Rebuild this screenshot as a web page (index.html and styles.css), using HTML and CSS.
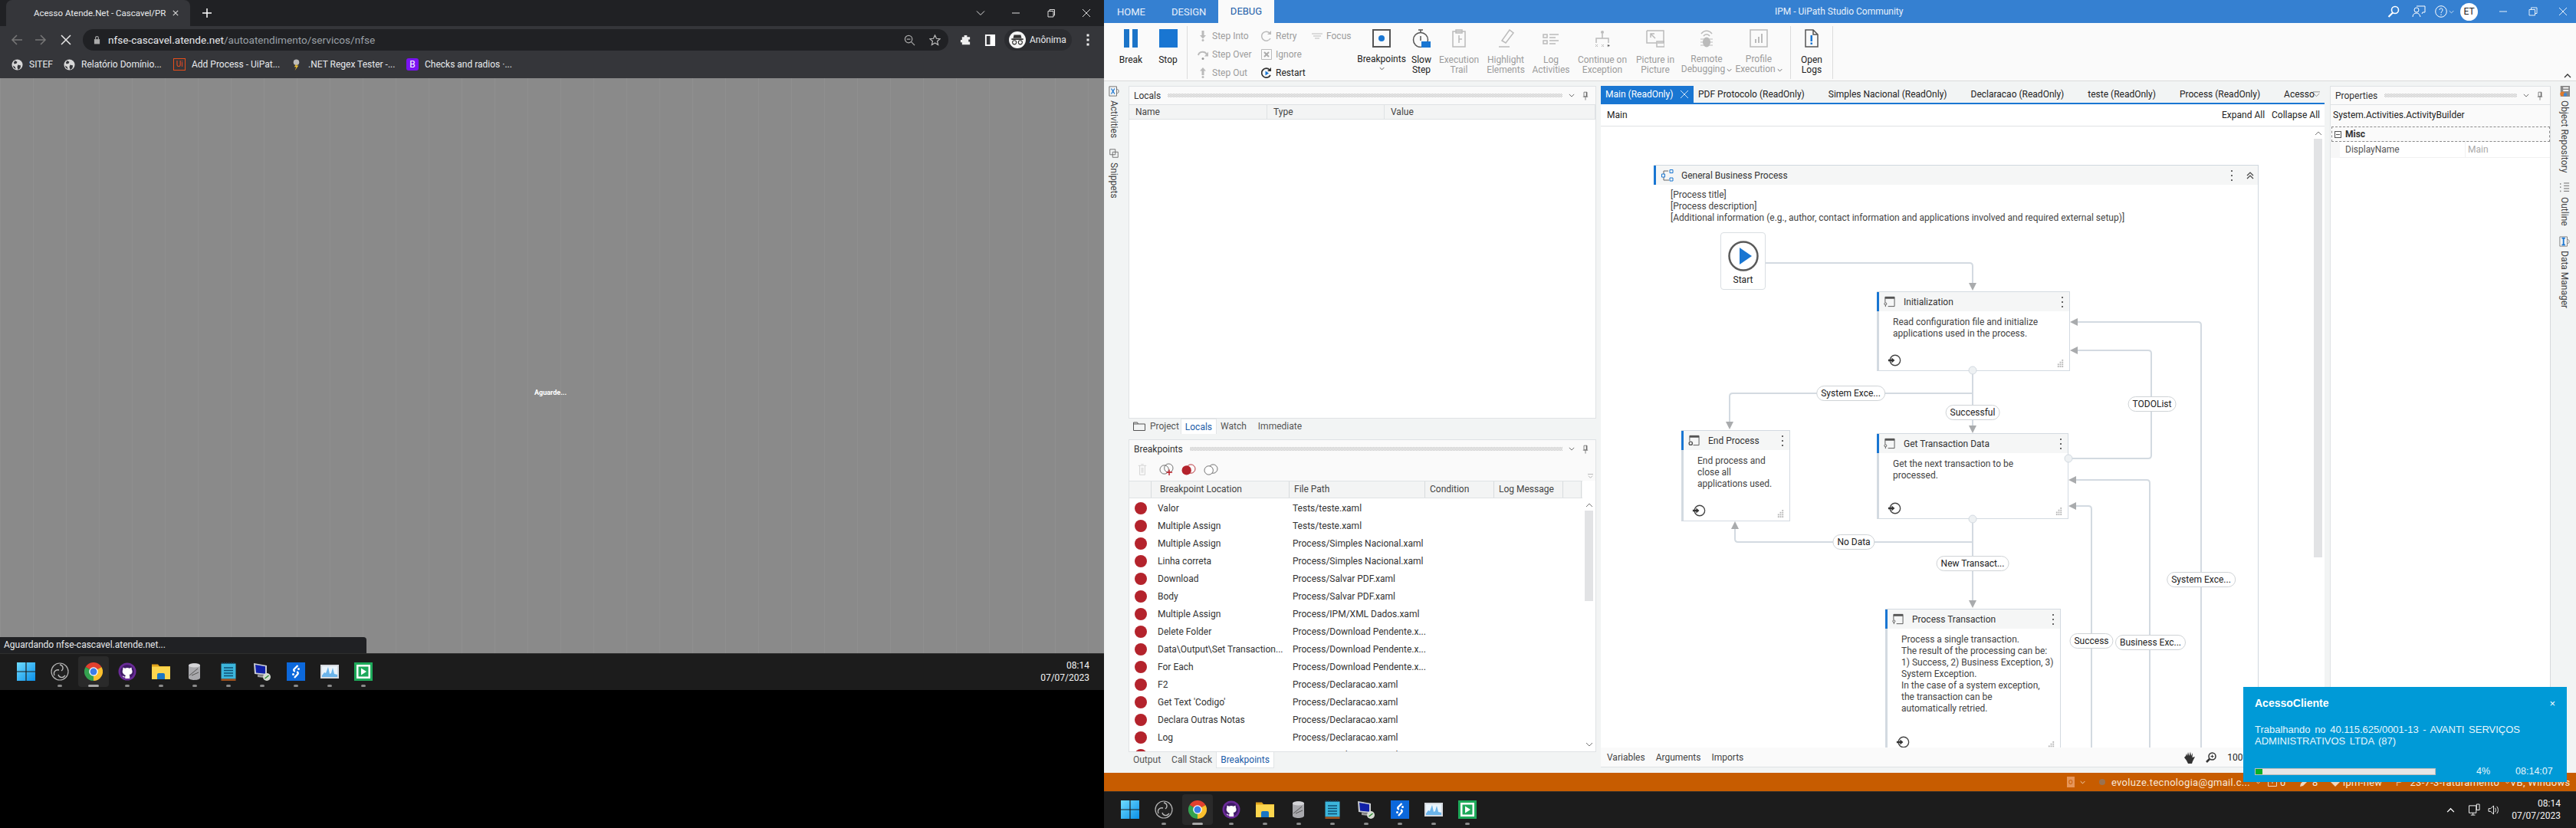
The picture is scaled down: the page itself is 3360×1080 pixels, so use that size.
FILE: index.html
```html
<!DOCTYPE html>
<html lang="en">

<head>
    <meta charset="UTF-8">
    <title>IPM - UiPath Studio Community</title>
    <link rel="stylesheet" href="styles.css">
</head>

<body>
    <!-- shared icons -->
    <svg class="sprite" xmlns="http://www.w3.org/2000/svg">
        <defs>
            <linearGradient id="winblue" x1="0" y1="0" x2="1" y2="1">
                <stop offset="0" stop-color="#6fdcff" />
                <stop offset="1" stop-color="#0a8fe8" />
            </linearGradient>
        </defs>
        <symbol id="s-win" viewBox="0 0 24 24">
            <path fill="url(#winblue)" d="M0 0h11.4v11.4H0zM12.6 0H24v11.4H12.6zM0 12.6h11.4V24H0zM12.6 12.6H24V24H12.6z" />
        </symbol>
        <symbol id="s-obs" viewBox="0 0 24 24">
            <circle cx="12" cy="12" r="11" fill="#222" stroke="#b4b4b4" stroke-width="1.2" />
            <path fill="none" stroke="#bdbdbd" stroke-width="1.3" d="M12 3c5 1 5 6 2 8M5 17c-2-5 2-8 6-7M19 17c-3 4-8 3-9-1" />
        </symbol>
        <symbol id="s-chrome" viewBox="0 0 24 24">
            <path fill="#e2402f" d="M12 12 1.6 6a12 12 0 0 1 20.8 0z" />
            <path fill="#34a24f" d="M12 12 1.6 6A12 12 0 0 0 12 24z" />
            <path fill="#fbc02d" d="M12 12 22.4 6A12 12 0 0 1 12 24z" />
            <circle cx="12" cy="12" r="5.8" fill="#fff" />
            <circle cx="12" cy="12" r="4.5" fill="#3b7de8" />
        </symbol>
        <symbol id="s-github" viewBox="0 0 24 24">
            <circle cx="12" cy="12" r="11.5" fill="#6a2a98" />
            <circle cx="12" cy="12" r="9" fill="#3f1a66" />
            <path fill="#fff" d="M6.5 6.5 9 7.7a8 8 0 0 1 6 0l2.5-1.2.4 3c1.5 3 .5 6-3.4 6.5.6.5.7 1 .7 2v3H9.300v-1.500c-2 .4-3-.4-3.600-2l1.400.2c.6 1 1.200 1.100 2.200.8 0-.5.200-1 .6-1.500C6 15 5 12.500 6.200 9.500z" />
        </symbol>
        <symbol id="s-folder" viewBox="0 0 24 24">
            <path fill="#e0a21a" d="M0 2.500h8l2 2.500h14v4H0z" />
            <path fill="#fcd64e" d="M0 5.500h24V22H0z" />
            <path fill="#1976c4" d="M7 16a2 2 0 0 1 2-2h6a2 2 0 0 1 2 2v6H7z" />
        </symbol>
        <symbol id="s-db" viewBox="0 0 24 24">
            <path fill="#a9a9ad" d="M4 4c0-4 15-4 15 0v16c0 4-15 4-15 0z" />
            <ellipse cx="11.500" cy="4" rx="7.500" ry="2.500" fill="#d5d5d8" />
            <path fill="none" stroke="#555" d="M5 17 16 8M8 17l9-4" />
        </symbol>
        <symbol id="s-notes" viewBox="0 0 24 24">
            <path fill="#3cb6dc" d="M2.500 1.500h19v20h-19z" />
            <path fill="#a0521e" d="M2.500 21.500h19V24h-19z" />
            <path stroke="#0e4f73" stroke-width="1.600" d="M6 7h12M6 10.500h12M6 14h12M6 17.500h12" />
            <path stroke="#0e4f73" stroke-width="1.500" stroke-dasharray="1.500 1.500" d="M3 1h18" />
        </symbol>
        <symbol id="s-remote" viewBox="0 0 24 24">
            <path fill="#c9ccd2" d="M1 1l17 3v13L2 15z" />
            <path fill="#1020a8" d="M3 3l13 2.200v9.600L4 13.500z" />
            <path fill="#9a9a9a" d="M6 16l8 1v3l-8-1z" />
            <circle cx="18" cy="19" r="5" fill="#d7dcd3" />
            <path stroke="#2a8a2a" stroke-width="1.500" d="M15.500 21l5-4" />
        </symbol>
        <symbol id="s-s" viewBox="0 0 24 24">
            <path fill="#0c68db" d="M0 0h24v24H0z" />
            <path fill="none" stroke="#fff" stroke-width="2.300" d="M14.500 4 9.500 9c-1 1.500 0 2.300 1.500 2.700M13 12.300c1.500.5 2.300 1.200 1.500 2.700L10 20" />
            <circle cx="15.500" cy="8.500" r="1.500" fill="#fff" />
            <circle cx="8.500" cy="15.500" r="1.500" fill="#fff" />
        </symbol>
        <symbol id="s-monitor" viewBox="0 0 24 24">
            <path fill="#d5d9de" d="M0 3h24v18H0z" />
            <path fill="#eaf4fb" d="M2 5h20v14H2z" />
            <path fill="#6bb4ea" d="M2 17l3-4 2 1 3-8 2 9 2-1 2-7 2 8 4 1v3H2z" />
        </symbol>
        <symbol id="s-play" viewBox="0 0 24 24">
            <path fill="#1ea95a" d="M0 0h24v24H0z" />
            <path fill="#fff" d="M3 3h18v18H3z" />
            <path fill="#1ea95a" d="M5.500 5.500h13v13h-13z" />
            <path fill="#fff" d="M9 7.500l7 4.500-7 4.500z" />
        </symbol>
        <symbol id="s-globe" viewBox="0 0 16 16">
            <circle cx="8" cy="8" r="7.500" fill="#d8d8d8" />
            <path fill="#35363a" d="M5 2 8 4 7 6 4 7 3 5zM9 8l4 1-1 4-3 2-1-4zM2 9l3 2 1 3-3-2z" />
        </symbol>
        <symbol id="s-seq" viewBox="0 0 16 16">
            <path fill="none" stroke="#555" d="M2 9V1.500h13v13H6" />
            <path fill="#555" d="M2 1h13v3H2z" />
            <circle cx="2.500" cy="11" r="1.600" fill="none" stroke="#555" />
            <path stroke="#555" d="M2.500 12.500V15" />
        </symbol>
        <symbol id="s-seq-end" viewBox="0 0 16 16">
            <path fill="none" stroke="#555" d="M2 9V1.500h13v13H7" />
            <path fill="#555" d="M2 1h13v3H2z" />
            <circle cx="3.500" cy="12" r="2.300" fill="none" stroke="#555" stroke-width="1.500" />
        </symbol>
        <symbol id="s-entry" viewBox="0 0 20 20">
            <circle cx="11" cy="10" r="7.500" fill="none" stroke="#444" stroke-width="1.500" />
            <path fill="#333" d="M1 8.500h5V6l4.500 4L6 14v-2.500H1z" />
        </symbol>
        <symbol id="s-grip" viewBox="0 0 12 12">
            <path fill="#b3b3b3" d="M8 1h2v2H8zM8 4h2v2H8zM5 4h2v2H5zM8 7h2v2H8zM5 7h2v2H5zM2 7h2v2H2zM8 10h2v2H8zM5 10h2v2H5zM2 10h2v2H2z" />
        </symbol>
        <symbol id="s-dots" viewBox="0 0 4 16">
            <path fill="#666" d="M1 1h2v2H1zM1 7h2v2H1zM1 13h2v2H1z" />
        </symbol>
        <symbol id="s-chev" viewBox="0 0 10 6">
            <path fill="none" stroke="currentColor" stroke-width="1.200" d="M1 1l4 4 4-4" />
        </symbol>
        <symbol id="s-pin" viewBox="0 0 10 14">
            <path fill="none" stroke="#666" d="M2.500 1h5v7h-5zM1 8.500h8M5 9v5" />
            <path fill="#666" d="M6 1h1.500v7H6z" />
        </symbol>
        <symbol id="s-bp" viewBox="0 0 16 16">
            <circle cx="8" cy="8" r="8" fill="#b4232c" />
        </symbol>
    </svg>

    <div class="desktop">
        <section class="screen-left">
            <div class="browser">
                <div class="tabstrip">
                    <div class="browser-tab">
                        <span class="browser-tab-title">Acesso Atende.Net - Cascavel/PR</span>
                        <svg class="tab-x" viewBox="0 0 10 10"><path stroke="#ddd" stroke-width="1.300" d="M1 1l8 8M9 1l-8 8" /></svg>
                    </div>
                    <svg class="tab-plus" viewBox="0 0 12 12"><path stroke="#fff" stroke-width="1.500" d="M6 0v12M0 6h12" /></svg>
                    <div class="win-controls">
                        <svg class="win-ctl" viewBox="0 0 12 12"><path fill="none" stroke="#ddd" d="M1 3.500l5 5 5-5" /></svg>
                        <svg class="win-ctl" viewBox="0 0 12 12"><path stroke="#ddd" d="M1 6h10" /></svg>
                        <svg class="win-ctl" viewBox="0 0 12 12"><path fill="none" stroke="#ddd" d="M2 3.500h7v7.500H2zM4 3.500V1.500h6.500V9H9" /></svg>
                        <svg class="win-ctl" viewBox="0 0 12 12"><path stroke="#ddd" d="M1 1l10 10M11 1 1 11" /></svg>
                    </div>
                </div>
                <div class="toolbar">
                    <svg class="nav-ic nav-back" viewBox="0 0 16 16"><path fill="none" stroke="#777" stroke-width="1.500" d="M15 8H2M8 2 2 8l6 6" /></svg>
                    <svg class="nav-ic nav-fwd" viewBox="0 0 16 16"><path fill="none" stroke="#777" stroke-width="1.500" d="M1 8h13M8 2l6 6-6 6" /></svg>
                    <svg class="nav-ic nav-stop" viewBox="0 0 16 16"><path stroke="#e8e8e8" stroke-width="1.500" d="M2 2l12 12M14 2 2 14" /></svg>
                    <div class="omnibox">
                        <svg class="lock" viewBox="0 0 10 12"><path fill="#aaa" d="M1 5h8v7H1z" /><path fill="none" stroke="#aaa" stroke-width="1.300" d="M3 5V3a2 2 0 0 1 4 0v2" /></svg>
                        <span class="url"><b>nfse-cascavel.atende.net</b>/autoatendimento/servicos/nfse</span>
                        <svg class="omni-ic omni-search" viewBox="0 0 16 16"><circle cx="6.500" cy="6.500" r="5" fill="none" stroke="#aaa" stroke-width="1.300" /><path stroke="#aaa" stroke-width="1.300" d="M10 10l5 5M4 6.500h5" /></svg>
                        <svg class="omni-ic omni-star" viewBox="0 0 16 16"><path fill="none" stroke="#bbb" stroke-width="1.300" d="M8 1l2.100 4.600 5 .5-3.800 3.300 1.100 5L8 11.800l-4.400 2.600 1.100-5L.9 6.100l5-.5z" /></svg>
                    </div>
                    <svg class="tool-ic tool-ext" viewBox="0 0 16 16"><path fill="#eee" d="M6 1h4v2.500h4V7h-2v3h2v4H3v-3H1V7.500h2V3.500h3z" /></svg>
                    <svg class="tool-ic tool-side" viewBox="0 0 14 16"><path fill="#fff" d="M0 0h14v16H0z" /><path fill="#35363a" d="M2 2h5v12H2z" /></svg>
                    <div class="anon-chip">
                        <svg class="anon-face" viewBox="0 0 20 20"><circle cx="10" cy="10" r="10" fill="#f5f5f5" /><path fill="#333" d="M6 4h8l1 4H5zM3 8.500h14V10H3z" /><circle cx="6.500" cy="13" r="2.300" fill="none" stroke="#333" /><circle cx="13.500" cy="13" r="2.300" fill="none" stroke="#333" /></svg>
                        <span>Anônima</span>
                    </div>
                    <svg class="tool-menu" viewBox="0 0 4 16"><path fill="#eee" d="M.5.500h3v3h-3zM.5 6.500h3v3h-3zM.5 12.500h3v3h-3z" /></svg>
                </div>
                <div class="bookmarks">
                    <div class="bookmark bm-sitef"><svg class="bm-ic"><use href="#s-globe" /></svg>SITEF</div>
                    <div class="bookmark bm-dominio"><svg class="bm-ic"><use href="#s-globe" /></svg>Relatório Domínio...</div>
                    <div class="bookmark bm-add"><span class="bm-ui">Ui</span>Add Process - UiPat...</div>
                    <div class="bookmark bm-regex"><svg class="bm-ic" viewBox="0 0 16 16"><circle cx="8" cy="4.500" r="4" fill="#bbb" /><path fill="#f4c430" d="M9 6 5 11h3l-2 5 5-7H8z" /></svg>.NET Regex Tester -...</div>
                    <div class="bookmark bm-boot"><span class="bm-b">B</span>Checks and radios ·...</div>
                </div>
                <div class="page-overlay">
                    <span class="wait-text">Aguarde...</span>
                    <div class="status-tip">Aguardando nfse-cascavel.atende.net...</div>
                </div>
            </div>
            <div class="taskbar">
                <div class="slot"><svg class="task-ic"><use href="#s-win" /></svg></div>
                <div class="slot"><svg class="task-ic"><use href="#s-obs" /></svg><i></i></div>
                <div class="slot active"><svg class="task-ic"><use href="#s-chrome" /></svg><i></i></div>
                <div class="slot"><svg class="task-ic"><use href="#s-github" /></svg><i></i></div>
                <div class="slot"><svg class="task-ic"><use href="#s-folder" /></svg><i></i></div>
                <div class="slot"><svg class="task-ic"><use href="#s-db" /></svg><i></i></div>
                <div class="slot"><svg class="task-ic"><use href="#s-notes" /></svg><i></i></div>
                <div class="slot"><svg class="task-ic"><use href="#s-remote" /></svg><i></i></div>
                <div class="slot"><svg class="task-ic"><use href="#s-s" /></svg><i></i></div>
                <div class="slot"><svg class="task-ic"><use href="#s-monitor" /></svg><i></i></div>
                <div class="slot"><svg class="task-ic"><use href="#s-play" /></svg><i></i></div>
                <div class="clock">08:14<br>07/07/2023</div>
            </div>
            <div class="black-rest"></div>
        </section>

        <section class="screen-right">
            <div class="titlebar">
                <div class="ribbon-tab">HOME</div>
                <div class="ribbon-tab tab-design">DESIGN</div>
                <div class="ribbon-tab tab-debug">DEBUG</div>
                <div class="app-title">IPM - UiPath Studio Community</div>
                <svg class="title-ic title-search" viewBox="0 0 16 16"><circle cx="10" cy="6" r="4.500" fill="none" stroke="#fff" stroke-width="1.600" /><path stroke="#fff" stroke-width="2.200" d="M7 9.500 1.500 15" /></svg>
                <svg class="title-ic title-feedback" viewBox="0 0 18 16"><circle cx="6" cy="6" r="3" fill="none" stroke="#fff" /><path fill="none" stroke="#fff" d="M1 15c0-3 2-5 5-5s4 2 5 5M6 1h11v8h-3l-1 2" /></svg>
                <svg class="title-ic title-help" viewBox="0 0 16 16"><circle cx="8" cy="8" r="7.300" fill="none" stroke="#fff" /><path fill="none" stroke="#fff" d="M6 6c0-3 4-3 4 0 0 2-2 2-2 4M8 11.500v1.500" /></svg>
                <svg class="title-chev" viewBox="0 0 10 6"><path fill="none" stroke="#fff" d="M1 1l4 4 4-4" /></svg>
                <div class="avatar">ET</div>
                <svg class="app-ctl" viewBox="0 0 12 12"><path stroke="#e6f0fa" d="M1 6h10" /></svg>
                <svg class="app-ctl" viewBox="0 0 12 12"><path fill="none" stroke="#e6f0fa" d="M1 3.500h7.500V11H1zM3.500 3.500V1H11v7.500H8.500" /></svg>
                <svg class="app-ctl" viewBox="0 0 12 12"><path stroke="#e6f0fa" d="M1 1l10 10M11 1 1 11" /></svg>
            </div>

            <div class="ribbon">
                <div class="rb-big">
                    <svg class="rb-ic" viewBox="0 0 24 24"><path fill="#1b74c8" d="M3 0h7v24H3zM14 0h7v24h-7z" /></svg>
                    <span>Break</span>
                </div>
                <div class="rb-big">
                    <svg class="rb-ic" viewBox="0 0 24 24"><path fill="#1976d2" d="M0 0h24v24H0z" /></svg>
                    <span>Stop</span>
                </div>
                <div class="rb-sep"></div>
                <div class="rb-col rb-col-a">
                    <div class="rb-small off"><svg class="rb-sm-ic" viewBox="0 0 14 14"><path fill="#bbb" d="M5.500 0h3v6H11L7 10.500 3 6h2.500z" /><circle cx="7" cy="12.500" r="1.500" fill="#bbb" /></svg>Step Into</div>
                    <div class="rb-small off"><svg class="rb-sm-ic" viewBox="0 0 14 14"><path fill="none" stroke="#bbb" stroke-width="2" d="M1 8c1-5 9-6 11-1" /><path fill="#bbb" d="M14 3.500v6H9z" /><circle cx="7" cy="12.500" r="1.500" fill="#999" /></svg>Step Over</div>
                    <div class="rb-small off"><svg class="rb-sm-ic" viewBox="0 0 14 14"><path fill="#bbb" d="M7 0l4 4.500H8.500V10h-3V4.500H3z" /><circle cx="7" cy="12.500" r="1.500" fill="#bbb" /></svg>Step Out</div>
                </div>
                <div class="rb-col">
                    <div class="rb-small off"><svg class="rb-sm-ic" viewBox="0 0 14 14"><path fill="none" stroke="#bbb" stroke-width="1.500" d="M12 10A6 6 0 1 1 11 3" /><path fill="#bbb" d="M13 0v5H8z" /></svg>Retry</div>
                    <div class="rb-small off"><svg class="rb-sm-ic" viewBox="0 0 14 14"><path fill="none" stroke="#bbb" d="M.5.500h13v13H.5z" /><path stroke="#aaa" stroke-width="2" d="M4 4l6 6M10 4l-6 6" /></svg>Ignore</div>
                    <div class="rb-small"><svg class="rb-sm-ic" viewBox="0 0 14 14"><path fill="none" stroke="#333" stroke-width="1.700" d="M12 10A6 6 0 1 1 11 3" /><path fill="#333" d="M13 0v5H8z" /><path fill="#1976d2" d="M5.500 4.500 10 7.500 5.500 10.500z" /></svg>Restart</div>
                </div>
                <div class="rb-col">
                    <div class="rb-small off"><svg class="rb-sm-ic" viewBox="0 0 14 14"><path stroke="#bbb" d="M0 4h14M2 7h10M4 10h6" /></svg>Focus</div>
                </div>
                <div class="rb-big">
                    <svg class="rb-ic" viewBox="0 0 24 24"><path fill="none" stroke="#555" stroke-width="2" d="M1 1h22v22H1z" /><circle cx="12" cy="12" r="4" fill="#1976d2" /></svg>
                    <span class="lift">Breakpoints</span>
                    <svg class="rb-chev" viewBox="0 0 10 6"><use href="#s-chev" /></svg>
                </div>
                <div class="rb-big">
                    <svg class="rb-ic" viewBox="0 0 24 24"><circle cx="11" cy="14" r="9.500" fill="none" stroke="#555" stroke-width="1.500" /><path stroke="#555" stroke-width="1.500" d="M8 1h6M11 1v3M11 9v6" /><path fill="#1976d2" d="M12 16h12v8H12z" /></svg>
                    <span>Slow<br>Step</span>
                </div>
                <div class="rb-big off">
                    <svg class="rb-ic" viewBox="0 0 24 24"><path fill="none" stroke="#bbb" stroke-width="1.500" d="M4 3h16v20H4zM8 1h8v4H8zM12 8v10M12 13h4" /></svg>
                    <span>Execution<br>Trail</span>
                </div>
                <div class="rb-big off">
                    <svg class="rb-ic" viewBox="0 0 24 24"><path fill="none" stroke="#bbb" stroke-width="1.500" d="M17 1l5 4-10 13-5-3zM3 23h14" /></svg>
                    <span>Highlight<br>Elements</span>
                </div>
                <div class="rb-big off">
                    <svg class="rb-ic" viewBox="0 0 24 24"><path fill="none" stroke="#bbb" stroke-width="1.500" d="M2 7h5v4H2zM2 15h5v4H2zM10 7h12M10 11h8M10 15h12M10 19h8" /></svg>
                    <span>Log<br>Activities</span>
                </div>
                <div class="rb-big off">
                    <svg class="rb-ic" viewBox="0 0 24 24"><path fill="none" stroke="#bbb" stroke-width="1.500" d="M12 6v6M4 18v-6h16v6" /><circle cx="12" cy="4" r="2" fill="#bbb" /><path stroke="#bbb" d="M3 20l3 3M6 20l-3 3M11 20l3 3M14 20l-3 3M19 20l3 1.500-3 1.500z" /></svg>
                    <span>Continue on<br>Exception</span>
                </div>
                <div class="rb-big off">
                    <svg class="rb-ic" viewBox="0 0 24 24"><path fill="none" stroke="#bbb" stroke-width="1.500" d="M1 2h22v16h-8M1 2v16h13M6 6l6 6M6 11V6h5" /><path fill="none" stroke="#bbb" stroke-width="1.500" d="M14 16h10v7H14z" /></svg>
                    <span>Picture in<br>Picture</span>
                </div>
                <div class="rb-big off">
                    <svg class="rb-ic" viewBox="0 0 24 24"><path fill="none" stroke="#bbb" stroke-width="1.500" d="M5 6c4-5 10-5 14 0M8 9c2-3 6-3 8 0" /><ellipse cx="12" cy="17" rx="5" ry="6.500" fill="#bbb" /><path stroke="#bbb" d="M4 13h16M4 17h16M4 21h16" /></svg>
                    <span class="lift">Remote<br>Debugging<svg class="rb-chev-in" viewBox="0 0 10 6"><use href="#s-chev" /></svg></span>
                </div>
                <div class="rb-big off">
                    <svg class="rb-ic" viewBox="0 0 24 24"><path fill="none" stroke="#bbb" stroke-width="1.500" d="M1 1h22v22H1z" /><path stroke="#bbb" stroke-width="2" d="M8 18v-5M12 18v-8M16 18V6" /></svg>
                    <span class="lift">Profile<br>Execution<svg class="rb-chev-in" viewBox="0 0 10 6"><use href="#s-chev" /></svg></span>
                </div>
                <div class="rb-gap"></div>
                <div class="rb-sep"></div>
                <div class="rb-big">
                    <svg class="rb-ic" viewBox="0 0 24 24"><path fill="none" stroke="#555" stroke-width="1.500" d="M4 1h10l6 6v16H4zM14 1v6h6" /><path fill="#1976d2" d="M10.500 8h2.500v8h-2.500zM10.500 17.500h2.500V20h-2.500z" /></svg>
                    <span>Open<br>Logs</span>
                </div>
                <div class="rb-sep"></div>
                <svg class="rb-collapse" viewBox="0 0 10 6"><path fill="none" stroke="#333" stroke-width="1.300" d="M1 5l4-4 4 4" /></svg>
            </div>

            <div class="workspace">
                <div class="side-strip">
                    <svg class="side-ic" viewBox="0 0 16 16"><path fill="none" stroke="#666" d="M1 1h11v14H1zM12 5c2 0 3 1 3 3s-1 3-3 3" /><path stroke="#1976d2" stroke-width="1.500" d="M4 4l5 8M9 4l-5 8" /></svg>
                    <span class="side-text">Activities</span>
                    <svg class="side-ic side-ic-b" viewBox="0 0 16 16"><path fill="none" stroke="#666" d="M2 2h8v8H2zM6 6h8v8H6z" /></svg>
                    <span class="side-text">Snippets</span>
                </div>

                <div class="debug-col">
                    <div class="panel panel-locals">
                        <div class="panel-head">
                            <span class="panel-title">Locals</span>
                            <span class="grip"></span>
                            <svg class="ph-chev"><use href="#s-chev" /></svg>
                            <svg class="ph-pin"><use href="#s-pin" /></svg>
                        </div>
                        <div class="locals-head">
                            <div>Name</div>
                            <div>Type</div>
                            <div>Value</div>
                        </div>
                    </div>
                    <div class="subtabs subtabs-top">
                        <svg class="folder-ic" viewBox="0 0 16 12"><path fill="none" stroke="#555" d="M.5 1h5l1 2h9v8.500H.5zM.5 3h6" /></svg>
                        <span class="subtab subtab-project">Project</span>
                        <span class="subtab current">Locals</span>
                        <span class="subtab">Watch</span>
                        <span class="subtab subtab-immediate">Immediate</span>
                    </div>

                    <div class="panel panel-break">
                        <div class="panel-head">
                            <span class="panel-title">Breakpoints</span>
                            <span class="grip"></span>
                            <svg class="ph-chev"><use href="#s-chev" /></svg>
                            <svg class="ph-pin"><use href="#s-pin" /></svg>
                        </div>
                        <div class="bp-tools">
                            <svg class="bp-tool bp-tool-del" viewBox="0 0 14 18"><path fill="none" stroke="#d0d0d0" d="M1 3h12M3 3v14h8V3M5 1h4M6 6v8M8 6v8" /></svg>
                            <svg class="bp-tool" viewBox="0 0 20 18"><circle cx="7" cy="9" r="6" fill="none" stroke="#666" /><circle cx="13" cy="7" r="6" fill="none" stroke="#666" /><path fill="#c0202a" d="M10 12h3v-3h1.500v3H18v1.500h-3.500V17H13v-3.500h-3z" /></svg>
                            <svg class="bp-tool" viewBox="0 0 20 18"><circle cx="13" cy="8" r="6" fill="none" stroke="#b4232c" /><circle cx="7" cy="10" r="6.500" fill="#b4232c" /></svg>
                            <svg class="bp-tool" viewBox="0 0 20 18"><circle cx="13" cy="8" r="6" fill="none" stroke="#666" /><circle cx="7" cy="10" r="6" fill="#fff" stroke="#666" /></svg>
                            <svg class="bp-tools-more" viewBox="0 0 8 8"><path fill="none" stroke="#aaa" d="M0 .5h8M1 3l3 3 3-3" /></svg>
                        </div>
                        <div class="bp-head">
                            <div></div>
                            <div>Breakpoint Location</div>
                            <div>File Path</div>
                            <div>Condition</div>
                            <div>Log Message</div>
                            <div></div>
                        </div>
                        <div class="bp-body">
                            <div class="bp-list">
                                <div class="bp-row"><svg class="bp-dot"><use href="#s-bp" /></svg><span>Valor</span><span>Tests/teste.xaml</span></div>
                                <div class="bp-row"><svg class="bp-dot"><use href="#s-bp" /></svg><span>Multiple Assign</span><span>Tests/teste.xaml</span></div>
                                <div class="bp-row"><svg class="bp-dot"><use href="#s-bp" /></svg><span>Multiple Assign</span><span>Process/Simples Nacional.xaml</span></div>
                                <div class="bp-row"><svg class="bp-dot"><use href="#s-bp" /></svg><span>Linha correta</span><span>Process/Simples Nacional.xaml</span></div>
                                <div class="bp-row"><svg class="bp-dot"><use href="#s-bp" /></svg><span>Download</span><span>Process/Salvar PDF.xaml</span></div>
                                <div class="bp-row"><svg class="bp-dot"><use href="#s-bp" /></svg><span>Body</span><span>Process/Salvar PDF.xaml</span></div>
                                <div class="bp-row"><svg class="bp-dot"><use href="#s-bp" /></svg><span>Multiple Assign</span><span>Process/IPM/XML Dados.xaml</span></div>
                                <div class="bp-row"><svg class="bp-dot"><use href="#s-bp" /></svg><span>Delete Folder</span><span>Process/Download Pendente.x...</span></div>
                                <div class="bp-row"><svg class="bp-dot"><use href="#s-bp" /></svg><span>Data\Output\Set Transaction...</span><span>Process/Download Pendente.x...</span></div>
                                <div class="bp-row"><svg class="bp-dot"><use href="#s-bp" /></svg><span>For Each</span><span>Process/Download Pendente.x...</span></div>
                                <div class="bp-row"><svg class="bp-dot"><use href="#s-bp" /></svg><span>F2</span><span>Process/Declaracao.xaml</span></div>
                                <div class="bp-row"><svg class="bp-dot"><use href="#s-bp" /></svg><span>Get Text 'Codigo'</span><span>Process/Declaracao.xaml</span></div>
                                <div class="bp-row"><svg class="bp-dot"><use href="#s-bp" /></svg><span>Declara Outras Notas</span><span>Process/Declaracao.xaml</span></div>
                                <div class="bp-row"><svg class="bp-dot"><use href="#s-bp" /></svg><span>Log</span><span>Process/Declaracao.xaml</span></div>
                                <div class="bp-row"><svg class="bp-dot"><use href="#s-bp" /></svg><span>Log</span><span>Process/Declaracao.xaml</span></div>
                            </div>
                            <div class="vscroll">
                                <svg class="vs-arrow" viewBox="0 0 10 6"><path fill="none" stroke="#777" d="M1 5l4-4 4 4" /></svg>
                                <div class="vs-thumb vs-thumb-bp"></div>
                                <svg class="vs-arrow vs-down" viewBox="0 0 10 6"><path fill="none" stroke="#777" d="M1 1l4 4 4-4" /></svg>
                            </div>
                        </div>
                    </div>
                    <div class="subtabs subtabs-bottom">
                        <span class="subtab">Output</span>
                        <span class="subtab subtab-stack">Call Stack</span>
                        <span class="subtab current">Breakpoints</span>
                    </div>
                </div>

                <div class="center-col">
                    <div class="doc-tabs">
                        <div class="doc-tab current">Main (ReadOnly)<svg class="doc-x" viewBox="0 0 10 10"><path stroke="#cfe3f7" d="M0 0l10 10M10 0 0 10" /></svg></div>
                        <div class="doc-tab first">PDF Protocolo (ReadOnly)</div>
                        <div class="doc-tab">Simples Nacional (ReadOnly)</div>
                        <div class="doc-tab">Declaracao (ReadOnly)</div>
                        <div class="doc-tab">teste (ReadOnly)</div>
                        <div class="doc-tab">Process (ReadOnly)</div>
                        <div class="doc-tab">Acesso</div>
                        <svg class="doc-more" viewBox="0 0 10 8"><path fill="none" stroke="#888" d="M0 .5h10M1 3l4 4 4-4" /></svg>
                    </div>
                    <div class="crumbs">
                        <span class="crumb-main">Main</span>
                        <span>Expand All</span>
                        <span class="crumb-collapse">Collapse All</span>
                    </div>
                    <div class="canvas-wrap">
                        <div class="canvas">
                            <div class="outer-box">
                                <div class="node-head">
                                    <svg class="outer-ic" viewBox="0 0 16 16"><path fill="none" stroke="#666" d="M3 2H9M3 2v4M3 10v4h7" /><path fill="none" stroke="#1976d2" d="M11 .5h4v4h-4zM.5 6h4v4h-4zM11 11h4v4h-4z" /></svg>
                                    <span class="node-title">General Business Process</span>
                                    <svg class="outer-dots"><use href="#s-dots" /></svg>
                                    <svg class="outer-collapse" viewBox="0 0 10 10"><path fill="none" stroke="#444" stroke-width="1.200" d="M1 5l4-4 4 4M1 9l4-4 4 4" /></svg>
                                </div>
                                <div class="outer-text">[Process title]<br>[Process description]<br>[Additional information (e.g., author, contact information and applications involved and required external setup)]</div>
                            </div>

                            <div class="start-box">
                                <svg class="start-ic" viewBox="0 0 40 40"><circle cx="20" cy="20" r="18.500" fill="#fff" stroke="#5a5a5a" stroke-width="2.500" /><path fill="#1976d2" d="M15 9l16 11-16 11z" /></svg>
                                <span>Start</span>
                            </div>

                            <div class="node node-init">
                                <div class="node-head">
                                    <svg class="seq-ic"><use href="#s-seq" /></svg>
                                    <span class="node-title">Initialization</span>
                                    <svg class="node-dots"><use href="#s-dots" /></svg>
                                </div>
                                <div class="node-text">Read configuration file and initialize<br>applications used in the process.</div>
                                <div class="node-foot"><svg class="entry-ic"><use href="#s-entry" /></svg><svg class="grip-ic"><use href="#s-grip" /></svg></div>
                            </div>

                            <div class="node node-end">
                                <div class="node-head">
                                    <svg class="seq-ic"><use href="#s-seq-end" /></svg>
                                    <span class="node-title">End Process</span>
                                    <svg class="node-dots"><use href="#s-dots" /></svg>
                                </div>
                                <div class="node-text">End process and<br>close all<br>applications used.</div>
                                <div class="node-foot"><svg class="entry-ic"><use href="#s-entry" /></svg><svg class="grip-ic"><use href="#s-grip" /></svg></div>
                            </div>

                            <div class="node node-get">
                                <div class="node-head">
                                    <svg class="seq-ic"><use href="#s-seq" /></svg>
                                    <span class="node-title">Get Transaction Data</span>
                                    <svg class="node-dots"><use href="#s-dots" /></svg>
                                </div>
                                <div class="node-text">Get the next transaction to be<br>processed.</div>
                                <div class="node-foot"><svg class="entry-ic"><use href="#s-entry" /></svg><svg class="grip-ic"><use href="#s-grip" /></svg></div>
                            </div>

                            <div class="node node-proc">
                                <div class="node-head">
                                    <svg class="seq-ic"><use href="#s-seq" /></svg>
                                    <span class="node-title">Process Transaction</span>
                                    <svg class="node-dots"><use href="#s-dots" /></svg>
                                </div>
                                <div class="node-text">Process a single transaction.<br>The result of the processing can be:<br>1) Success, 2) Business Exception, 3)<br>System Exception.<br>In the case of a system exception,<br>the transaction can be<br>automatically retried.</div>
                                <div class="node-foot"><svg class="entry-ic"><use href="#s-entry" /></svg><svg class="grip-ic"><use href="#s-grip" /></svg></div>
                            </div>

                            <svg class="wires" viewBox="2088 165 927 810">
                                <g fill="none" stroke="#d3dae1" stroke-width="2">
                                    <path d="M2303 343H2569Q2573 343 2573 347V372" />
                                    <path d="M2573 484V560" />
                                    <path d="M2573 513H2260Q2256 513 2256 517V552" />
                                    <path d="M2573 677V785" />
                                    <path d="M2573 707H2267Q2263 707 2263 703V688" />
                                    <path d="M2698 598H2802Q2806 598 2806 594V461Q2806 457 2802 457H2707" />
                                    <path d="M2707 420H2867Q2871 420 2871 424V975" />
                                    <path d="M2705 626H2800Q2804 626 2804 630V975" />
                                    <path d="M2705 660H2724Q2728 660 2728 664V975" />
                                </g>
                                <g fill="#a9abad">
                                    <path d="M2573 379l-5-10h10z" />
                                    <path d="M2573 565l-5-10h10z" />
                                    <path d="M2256 560l-5-10h10z" />
                                    <path d="M2573 793l-5-10h10z" />
                                    <path d="M2263 680l-5 10h10z" />
                                    <path d="M2700 457l10-5v10z" />
                                    <path d="M2700 420l10-5v10z" />
                                    <path d="M2698 626l10-5v10z" />
                                    <path d="M2698 660l10-5v10z" />
                                </g>
                                <g fill="#eef1f3" stroke="#d3dae1">
                                    <circle cx="2573" cy="483" r="5" />
                                    <circle cx="2698" cy="598" r="5" />
                                    <circle cx="2573" cy="677" r="5" />
                                </g>
                            </svg>

                            <div class="pill pill-sys1">System Exce...</div>
                            <div class="pill pill-succ1">Successful</div>
                            <div class="pill pill-nodata">No Data</div>
                            <div class="pill pill-new">New Transact...</div>
                            <div class="pill pill-todo">TODOList</div>
                            <div class="pill pill-sys2">System Exce...</div>
                            <div class="pill pill-succ2">Success</div>
                            <div class="pill pill-bus">Business Exc...</div>
                        </div>
                        <div class="vscroll vscroll-canvas">
                            <svg class="vs-arrow" viewBox="0 0 10 6"><path fill="none" stroke="#777" d="M1 5l4-4 4 4" /></svg>
                            <div class="vs-thumb vs-thumb-canvas"></div>
                        </div>
                    </div>
                    <div class="canvas-bar">
                        <span>Variables</span>
                        <span>Arguments</span>
                        <span>Imports</span>
                        <svg class="hand-ic" viewBox="0 0 14 16"><path fill="#333" d="M2 6l1-3 1 3 1-5 1.500 5L8 .5 9 6l2-4-.5 6L14 7l-3 6-1 3H5L3 12 0 8z" /></svg>
                        <svg class="zoom-ic" viewBox="0 0 14 14"><circle cx="8.500" cy="5.500" r="4.500" fill="none" stroke="#333" stroke-width="1.500" /><path stroke="#333" stroke-width="2.500" d="M5 9 1 13" /><path stroke="#333" d="M6.500 5.500h4M8.500 3.500v4" /></svg>
                        <span class="zoom-val">100%</span>
                    </div>
                </div>

                <div class="props-col">
                    <div class="panel-head props-head">
                        <span class="panel-title">Properties</span>
                        <span class="grip"></span>
                        <svg class="ph-chev"><use href="#s-chev" /></svg>
                        <svg class="ph-pin"><use href="#s-pin" /></svg>
                    </div>
                    <div class="props-box">
                        <div class="props-type">System.Activities.ActivityBuilder</div>
                        <div class="props-group"><span class="props-minus"></span>Misc</div>
                        <div class="props-row"><span class="props-name">DisplayName</span><span class="props-value">Main</span></div>
                    </div>
                </div>

                <div class="side-strip side-strip-right">
                    <svg class="side-ic" viewBox="0 0 16 16"><path fill="#888" d="M2 0h14v16H2z" /><path fill="#fff" d="M6 2h8v2H6zM6 6h8v2H6z" /><circle cx="5" cy="12" r="3.500" fill="#e07b2c" /><circle cx="9" cy="13" r="2.500" fill="#3f88d8" /></svg>
                    <span class="side-text">Object Repository</span>
                    <svg class="side-ic side-ic-b" viewBox="0 0 16 16"><path stroke="#888" stroke-width="1.500" d="M2 1v2M2 6v2M7 1h8M7 5h8M7 9h8M7 13h8M2 12v2" /></svg>
                    <span class="side-text">Outline</span>
                    <svg class="side-ic side-ic-c" viewBox="0 0 16 16"><path fill="none" stroke="#777" d="M1 1h11v14H1zM12 5c2 0 3 1 3 3s-1 3-3 3" /><path stroke="#1976d2" stroke-width="2" d="M6.500 3v10M4 3h5M4 13h5" /></svg>
                    <span class="side-text">Data Manager</span>
                </div>
            </div>

            <div class="statusbar">
                <div class="st-item"><span class="st-o">o</span><svg class="st-chev"><use href="#s-chev" /></svg></div>
                <div class="st-item"><span class="st-dot"></span>evoluze.tecnologia@gmail.c...<svg class="st-chev"><use href="#s-chev" /></svg></div>
                <div class="st-item"><svg class="st-ic" viewBox="0 0 12 12"><path fill="none" stroke="#f1d6bd" d="M.5 5v6.500h11V5M6 8V1M3.500 3.500 6 1l2.500 2.500" /></svg>0</div>
                <div class="st-item"><svg class="st-ic" viewBox="0 0 12 12"><path fill="#f1d6bd" d="M9 0l3 3-8 8-4 1 1-4z" /></svg>8</div>
                <div class="st-item"><svg class="st-ic" viewBox="0 0 12 12"><path fill="#f1d6bd" d="M6 0l6 6-6 6-6-6z" /></svg>ipm-new</div>
                <div class="st-item"><span class="st-p">P</span>23-7-3-faturamento<svg class="st-chev"><use href="#s-chev" /></svg></div>
                <div class="st-item">VB, Windows</div>
            </div>

            <div class="taskbar">
                <div class="slot"><svg class="task-ic"><use href="#s-win" /></svg></div>
                <div class="slot"><svg class="task-ic"><use href="#s-obs" /></svg><i></i></div>
                <div class="slot active"><svg class="task-ic"><use href="#s-chrome" /></svg><i></i></div>
                <div class="slot"><svg class="task-ic"><use href="#s-github" /></svg><i></i></div>
                <div class="slot"><svg class="task-ic"><use href="#s-folder" /></svg><i></i></div>
                <div class="slot"><svg class="task-ic"><use href="#s-db" /></svg><i></i></div>
                <div class="slot"><svg class="task-ic"><use href="#s-notes" /></svg><i></i></div>
                <div class="slot"><svg class="task-ic"><use href="#s-remote" /></svg><i></i></div>
                <div class="slot"><svg class="task-ic"><use href="#s-s" /></svg><i></i></div>
                <div class="slot"><svg class="task-ic"><use href="#s-monitor" /></svg><i></i></div>
                <div class="slot"><svg class="task-ic"><use href="#s-play" /></svg><i></i></div>
                <svg class="tray-ic tray-up" viewBox="0 0 12 8"><path fill="none" stroke="#fff" stroke-width="1.500" d="M1 7l5-5 5 5" /></svg>
                <svg class="tray-ic tray-net" viewBox="0 0 16 18"><path fill="none" stroke="#fff" d="M.5 3h10v10H.5zM3 16h6M6 13v3M11 1h4v8h-4z" /></svg>
                <svg class="tray-ic tray-vol" viewBox="0 0 16 14"><path fill="none" stroke="#fff" d="M1 5h3l4-4v12l-4-4H1zM10 4c1.500 2 1.500 4 0 6M12.500 2c2.500 3 2.500 7 0 10" /></svg>
                <div class="clock clock-right">08:14<br>07/07/2023</div>
            </div>

            <div class="toast">
                <div class="toast-head"><span class="toast-title">AcessoCliente</span><span class="toast-x">×</span></div>
                <div class="toast-msg">Trabalhando no 40.115.625/0001-13 - AVANTI SERVIÇOS ADMINISTRATIVOS LTDA (87)</div>
                <div class="toast-foot">
                    <div class="toast-bar"><div class="toast-fill"></div></div>
                    <span class="toast-pct">4%</span>
                    <span>08:14:07</span>
                </div>
            </div>
        </section>
    </div>
</body>

</html>
```

FILE: styles.css
```css
* {
    box-sizing: border-box;
}

html,
body {
    margin: 0;
    padding: 0;
    background: #000;
}

body {
    width: 3360px;
    height: 1080px;
    overflow: hidden;
    font-family: Roboto, "Noto Sans", sans-serif;
    font-size: 12px;
    color: #333;
}

.sprite {
    position: absolute;
    width: 0;
    height: 0;
}

.desktop {
    display: flex;
    width: 3360px;
    height: 1080px;
}

/* ---------- left monitor ---------- */

.screen-left {
    width: 1440px;
    height: 1080px;
    display: flex;
    flex-direction: column;
}

.browser {
    height: 852px;
    display: flex;
    flex-direction: column;
    background: #35363a;
}

.tabstrip {
    height: 34px;
    background: #202124;
    display: flex;
    align-items: center;
    padding-left: 8px;
}

.browser-tab {
    width: 240px;
    height: 34px;
    background: #35363a;
    border-radius: 8px 8px 0 0;
    color: #e8eaed;
    display: flex;
    align-items: center;
    padding-left: 36px;
}

.browser-tab-title {
    width: 181px;
    font-size: 11.500px;
    white-space: nowrap;
}

.tab-x {
    width: 8px;
    height: 8px;
}

.tab-plus {
    width: 12px;
    height: 12px;
    margin-left: 16px;
}

.win-controls {
    margin-left: auto;
    display: flex;
    align-items: center;
    gap: 34px;
    padding-right: 17px;
    height: 28px;
}

.win-ctl {
    width: 12px;
    height: 12px;
}

.toolbar {
    height: 36px;
    display: flex;
    align-items: center;
    padding-left: 14px;
    position: relative;
}

.nav-ic {
    width: 16px;
    height: 16px;
}

.nav-fwd {
    margin-left: 15px;
}

.nav-stop {
    margin-left: 17px;
}

.omnibox {
    margin-left: 14px;
    width: 1129px;
    height: 28px;
    border-radius: 14px;
    background: #202124;
    display: flex;
    align-items: center;
    padding-left: 14px;
}

.lock {
    width: 9px;
    height: 12px;
}

.url {
    margin-left: 10px;
    font-size: 13.600px;
    color: #9aa0a6;
    white-space: nowrap;
}

.url b {
    font-weight: 400;
    color: #e8eaed;
}

.omni-ic {
    width: 15px;
    height: 15px;
}

.omni-search {
    margin-left: auto;
}

.omni-star {
    margin-left: 18px;
    margin-right: 10px;
}

.tool-ic {
    width: 15px;
    height: 15px;
}

.tool-ext {
    margin-left: 15px;
}

.tool-side {
    margin-left: 17px;
}

.anon-chip {
    margin-left: 11px;
    width: 88px;
    height: 28px;
    border-radius: 14px;
    background: #2b2c30;
    color: #e8eaed;
    display: flex;
    align-items: center;
    padding-left: 6px;
    gap: 5px;
}

.anon-face {
    width: 22px;
    height: 22px;
}

.tool-menu {
    width: 4px;
    height: 16px;
    margin-left: 19px;
}

.bookmarks {
    height: 32px;
    display: flex;
    align-items: center;
    color: #e8eaed;
    padding-bottom: 4px;
}

.bookmark {
    display: flex;
    align-items: center;
    gap: 8px;
    white-space: nowrap;
}

.bm-sitef {
    margin-left: 15px;
    width: 68px;
}

.bm-dominio {
    width: 143px;
}

.bm-add {
    width: 153px;
}

.bm-regex {
    width: 151px;
}

.bm-ic {
    width: 15px;
    height: 15px;
}

.bm-ui {
    width: 16px;
    height: 16px;
    border: 1px solid #e84e1b;
    color: #e84e1b;
    font-size: 10px;
    line-height: 14px;
    text-align: center;
    flex: none;
}

.bm-b {
    width: 16px;
    height: 16px;
    border-radius: 3px;
    background: #7a13f2;
    color: #fff;
    font-size: 12px;
    line-height: 16px;
    text-align: center;
    flex: none;
}

.page-overlay {
    flex: 1;
    position: relative;
    background-color: #8a8a8a;
    background-image: repeating-linear-gradient(90deg, #8f8f8f 0 1px, transparent 1px 43px);
    display: flex;
    align-items: center;
    justify-content: center;
}

.wait-text {
    color: #fff;
    font-size: 9px;
    font-weight: 700;
    margin-top: 70px;
    margin-left: -4px;
}

.status-tip {
    position: absolute;
    left: 0;
    bottom: 0;
    width: 478px;
    height: 21px;
    line-height: 21px;
    padding-left: 5px;
    background: #202124;
    color: #e8eaed;
    border-radius: 0 4px 0 0;
}

.taskbar {
    height: 48px;
    flex: none;
    background: #1c1c1c;
    border-top: 1px solid #2e2e2e;
    display: flex;
    padding-left: 12px;
    align-items: flex-start;
}

.slot {
    width: 40px;
    height: 40px;
    margin: 3px 2px 0;
    padding-top: 8px;
    display: flex;
    flex-direction: column;
    align-items: center;
    border-radius: 4px;
}

.slot.active {
    background: #2a2a2a;
}

.slot i {
    display: block;
    width: 6px;
    height: 3px;
    border-radius: 2px;
    background: #8a8a8a;
    margin-top: 5px;
}

.slot.active i {
    width: 14px;
    background: #a8a8a8;
}

.task-ic {
    width: 24px;
    height: 24px;
    flex: none;
}

.clock {
    margin-left: auto;
    margin-right: 19px;
    margin-top: 7px;
    color: #f2f2f2;
    text-align: right;
    line-height: 16px;
}

.clock-right {
    margin-left: 16px;
    margin-right: 20px;
}

.black-rest {
    flex: 1;
    background: #000;
}

/* ---------- right monitor ---------- */

.screen-right {
    position: relative;
    width: 1920px;
    height: 1080px;
    display: flex;
    flex-direction: column;
    background: #f2f4f4;
}

.titlebar {
    height: 30px;
    flex: none;
    background: #3580d1;
    color: #e8f1fb;
    display: flex;
    align-items: center;
    padding-left: 17px;
    position: relative;
    font-size: 13px;
}

.ribbon-tab {
    width: 71px;
}

.tab-design {
    width: 77px;
}

.tab-debug {
    width: 73px;
    height: 30px;
    margin-left: -16px;
    background: #fafafa;
    color: #1c5ca8;
    line-height: 30px;
    text-align: center;
}

.app-title {
    margin-left: 653px;
    width: 799px;
    font-size: 12px;
}

.title-ic {
    flex: none;
}

.title-search {
    width: 16px;
    height: 16px;
}

.title-feedback {
    width: 18px;
    height: 16px;
    margin-left: 16px;
}

.title-help {
    width: 16px;
    height: 16px;
    margin-left: 12px;
}

.title-chev {
    width: 7px;
    height: 5px;
    margin-left: 2px;
}

.avatar {
    width: 23px;
    height: 23px;
    border-radius: 50%;
    background: #fff;
    color: #222;
    font-size: 12px;
    line-height: 23px;
    text-align: center;
    margin-left: 8px;
}

.app-ctl {
    width: 12px;
    height: 12px;
    margin-left: 27px;
    flex: none;
}

.ribbon {
    height: 76px;
    flex: none;
    background: #fafafa;
    border-bottom: 1px solid #dadada;
    position: relative;
    padding-left: 11px;
    display: grid;
    grid-template-columns: 48px 49px 1px 96px 66px 58px 66px 38px 60px 62px 56px 78px 60px 74px 62px 10px 1px 54px 1px;
}

.rb-big {
    display: flex;
    flex-direction: column;
    align-items: center;
    text-align: center;
    padding-top: 8px;
    line-height: 13px;
    color: #222;
    white-space: nowrap;
}

.rb-big.off,
.rb-small.off {
    color: #9c9c9c;
}

.rb-ic {
    width: 24px;
    height: 24px;
    flex: none;
    margin-bottom: 10px;
}

.lift {
    margin-top: -1px;
}

.rb-chev {
    width: 7px;
    height: 5px;
    margin-top: 3px;
    color: #333;
}

.rb-chev-in {
    width: 7px;
    height: 5px;
    margin-left: 2px;
    color: #555;
}

.rb-sep {
    width: 1px;
    height: 69px;
    margin-top: 4px;
    background: #dcdcdc;
}

.rb-col {
    padding-top: 5px;
}

.rb-col-a {
    padding-left: 13px;
}

.rb-small {
    height: 24px;
    display: flex;
    align-items: center;
    gap: 5px;
    color: #222;
    white-space: nowrap;
}

.rb-sm-ic {
    width: 14px;
    height: 14px;
    flex: none;
}

.rb-collapse {
    position: absolute;
    right: 6px;
    bottom: 3px;
    width: 10px;
    height: 6px;
}

.workspace {
    flex: 1;
    min-height: 0;
    display: flex;
    padding-top: 6px;
}

.side-strip {
    width: 32px;
    flex: none;
    display: flex;
    flex-direction: column;
    align-items: center;
    padding-right: 6px;
}

.side-ic {
    width: 14px;
    height: 14px;
    flex: none;
    margin-bottom: 5px;
}

.side-ic-b {
    margin-top: 13px;
}

.side-ic-c {
    margin-top: 13px;
}

.side-text {
    writing-mode: vertical-rl;
    white-space: nowrap;
    color: #444;
}

.debug-col {
    width: 610px;
    flex: none;
    display: flex;
    flex-direction: column;
}

.panel {
    border: 1px solid #dfe2e4;
    background: #fff;
    flex: none;
}

.panel-locals {
    height: 434px;
}

.panel-break {
    height: 408px;
    display: flex;
    flex-direction: column;
    overflow: hidden;
}

.panel-head {
    height: 23px;
    flex: none;
    display: flex;
    align-items: center;
    background: #fafafa;
    padding-left: 6px;
    color: #333;
}

.panel-title {
    white-space: nowrap;
    margin-right: 9px;
}

.grip {
    flex: 1;
    height: 5px;
    background: repeating-conic-gradient(#c4c4c4 0 25%, transparent 0 50%) 0 0 / 2px 2px;
}

.ph-chev {
    width: 8px;
    height: 5px;
    margin-left: 8px;
    color: #666;
}

.ph-pin {
    width: 8px;
    height: 12px;
    margin-left: 10px;
    margin-right: 9px;
}

.locals-head {
    height: 20px;
    display: grid;
    grid-template-columns: 180px 153px 1fr;
    background: #f3f4f4;
    border-top: 1px solid #dfe2e4;
    border-bottom: 1px solid #dfe2e4;
    line-height: 18px;
    color: #444;
}

.locals-head div {
    padding-left: 8px;
    border-right: 1px solid #dfe2e4;
}

.subtabs {
    display: flex;
    align-items: center;
    flex: none;
    color: #555;
}

.subtabs-top {
    height: 20px;
    padding-left: 6px;
    margin-bottom: 7px;
}

.subtabs-bottom {
    height: 21px;
    padding-left: 1px;
    margin-bottom: 6px;
}

.folder-ic {
    width: 16px;
    height: 12px;
    margin-right: 1px;
}

.subtab {
    padding: 0 5px;
    height: 100%;
    line-height: 20px;
}

.subtab-project {
    padding-right: 2px;
}

.subtab-immediate {
    margin-left: 5px;
}

.subtab-stack {
    margin-left: 4px;
}

.subtab.current {
    color: #1c5ca8;
    background: #fff;
    border: 1px solid #e2e5e7;
    border-top: none;
    padding: 0 5px;
}

.subtabs-top .subtab.current {
    border-top: 1px solid #e2e5e7;
    border-bottom: none;
}

.bp-tools {
    height: 30px;
    flex: none;
    background: #fafafa;
    display: flex;
    align-items: center;
    padding-left: 11px;
    position: relative;
}

.bp-tool {
    width: 19px;
    height: 17px;
    margin-right: 10px;
}

.bp-tool-del {
    width: 12px;
    margin-right: 16px;
}

.bp-tools-more {
    position: absolute;
    right: 3px;
    bottom: 2px;
    width: 7px;
    height: 7px;
}

.bp-head {
    height: 23px;
    flex: none;
    display: grid;
    grid-template-columns: 29px 180px 177px 90px 90px 24px;
    margin-right: 17px;
    background: #f3f4f4;
    border-top: 1px solid #dfe2e4;
    border-bottom: 1px solid #dfe2e4;
    line-height: 21px;
    color: #444;
}

.bp-head div {
    padding-left: 11px;
    border-right: 1px solid #d8dbdd;
    white-space: nowrap;
}

.bp-head div:nth-child(n+3) {
    padding-left: 6px;
}

.bp-body {
    flex: 1;
    min-height: 0;
    display: flex;
}

.bp-list {
    flex: 1;
    padding-top: 1px;
    overflow: hidden;
}

.bp-row {
    height: 23px;
    display: grid;
    grid-template-columns: 37px 176px 1fr;
    align-items: center;
    white-space: nowrap;
    color: #333;
}

.bp-dot {
    width: 16px;
    height: 16px;
    margin-left: 7px;
}

.vscroll {
    width: 17px;
    flex: none;
    display: flex;
    flex-direction: column;
    align-items: center;
    position: relative;
    padding-top: 6px;
}

.vs-arrow {
    width: 10px;
    height: 6px;
    flex: none;
}

.vs-down {
    position: absolute;
    bottom: 6px;
}

.vs-thumb {
    width: 11px;
    background: #e2e3e5;
    margin-top: 4px;
}

.vs-thumb-bp {
    height: 118px;
}

.vs-thumb-canvas {
    height: 546px;
}

.center-col {
    width: 944px;
    flex: none;
    margin-left: 6px;
    display: flex;
    flex-direction: column;
}

.doc-tabs {
    height: 24px;
    flex: none;
    display: flex;
    align-items: flex-start;
    border-bottom: 2px solid #1976d2;
    white-space: nowrap;
    position: relative;
    line-height: 22px;
}

.doc-tab {
    margin-left: 31px;
    font-size: 12px;
    color: #222;
}

.doc-tab.current {
    margin-left: 0;
    width: 121px;
    height: 22px;
    padding-left: 6px;
    background: #1976d2;
    color: #fff;
    position: relative;
}

.doc-tab.first {
    margin-left: 6px;
}

.doc-x {
    position: absolute;
    right: 7px;
    top: 6px;
    width: 10px;
    height: 10px;
}

.doc-more {
    position: absolute;
    right: 6px;
    top: 7px;
    width: 9px;
    height: 8px;
}

.crumbs {
    height: 29px;
    flex: none;
    display: flex;
    align-items: center;
    background: #fff;
    border-bottom: 1px solid #dfe2e4;
    padding: 0 6px 0 8px;
    color: #222;
}

.crumb-main {
    margin-right: auto;
}

.crumb-collapse {
    margin-left: 9px;
}

.canvas-wrap {
    height: 810px;
    flex: none;
    display: flex;
    background: #fff;
}

.canvas {
    position: relative;
    width: 927px;
    height: 810px;
    overflow: hidden;
    background: #fff;
}

.vscroll-canvas {
    padding-top: 6px;
}

.outer-box {
    position: absolute;
    left: 69px;
    top: 50px;
    width: 789px;
    height: 800px;
    border: 1px solid #cfd8df;
    border-left: none;
    background: #fff;
}

.outer-box > .node-head {
    border-left: 3px solid #1976d2;
    position: relative;
}

.node-head {
    height: 25px;
    display: flex;
    align-items: center;
    background: #f5f6f6;
    color: #333;
    white-space: nowrap;
}

.outer-ic {
    width: 16px;
    height: 16px;
    margin-left: 7px;
    margin-right: 10px;
}

.outer-dots {
    width: 4px;
    height: 16px;
    margin-left: auto;
}

.outer-collapse {
    width: 10px;
    height: 10px;
    margin-left: 17px;
    margin-right: 5px;
}

.outer-text {
    padding: 6px 0 0 22px;
    line-height: 15px;
    color: #444;
    white-space: nowrap;
}

.start-box {
    position: absolute;
    left: 156px;
    top: 138px;
    width: 59px;
    height: 75px;
    border: 1px solid #d9dee2;
    border-radius: 4px;
    background: #fff;
    display: flex;
    flex-direction: column;
    align-items: center;
    padding-top: 10px;
    color: #222;
}

.start-ic {
    width: 40px;
    height: 40px;
    margin-bottom: 4px;
}

.node {
    position: absolute;
    background: #fff;
    border: 1px solid #d3dae1;
    border-left: 3px solid #d3dae1;
    display: flex;
    flex-direction: column;
}

.node > .node-head {
    margin-left: -3px;
    border-left: 3px solid #1976d2;
}

.node-init {
    left: 360px;
    top: 215px;
    width: 252px;
    height: 104px;
}

.node-end {
    left: 105px;
    top: 396px;
    width: 142px;
    height: 119px;
}

.node-get {
    left: 360px;
    top: 400px;
    width: 250px;
    height: 112px;
}

.node-proc {
    left: 371px;
    top: 629px;
    width: 229px;
    height: 188px;
}

.seq-ic {
    width: 15px;
    height: 15px;
    margin-left: 6px;
    margin-right: 11px;
    flex: none;
}

.node-dots {
    width: 4px;
    height: 16px;
    margin-left: auto;
    margin-right: 7px;
}

.node-text {
    flex: 1;
    padding: 7px 0 0 18px;
    line-height: 15px;
    color: #444;
    white-space: nowrap;
}

.node-foot {
    display: flex;
    justify-content: space-between;
    align-items: flex-end;
    padding: 0 6px 4px 11px;
}

.entry-ic {
    width: 18px;
    height: 18px;
}

.grip-ic {
    width: 11px;
    height: 11px;
}

.wires {
    position: absolute;
    left: 0;
    top: 0;
    width: 927px;
    height: 810px;
}

.pill {
    position: absolute;
    height: 20px;
    line-height: 18px;
    padding: 0 5px;
    border: 1px solid #cfd3d6;
    border-radius: 10px;
    background: #fff;
    color: #222;
    white-space: nowrap;
    transform: translate(-50%, -50%);
}

.pill-sys1 {
    left: 326px;
    top: 348px;
}

.pill-succ1 {
    left: 485px;
    top: 373px;
}

.pill-nodata {
    left: 330px;
    top: 542px;
}

.pill-new {
    left: 485px;
    top: 570px;
}

.pill-todo {
    left: 719px;
    top: 362px;
}

.pill-sys2 {
    left: 783px;
    top: 591px;
}

.pill-succ2 {
    left: 640px;
    top: 671px;
}

.pill-bus {
    left: 717px;
    top: 673px;
}

.canvas-bar {
    height: 26px;
    flex: none;
    display: flex;
    align-items: center;
    gap: 14px;
    padding-left: 8px;
    background: #fafafa;
    border-bottom: 1px solid #dfe2e4;
    color: #444;
}

.hand-ic {
    width: 14px;
    height: 16px;
    margin-left: 561px;
}

.zoom-ic {
    width: 14px;
    height: 14px;
    margin-left: 0;
}

.zoom-val {
    color: #222;
}

.props-col {
    width: 288px;
    flex: none;
    margin-left: 7px;
    display: flex;
    flex-direction: column;
    margin-bottom: 6px;
    border: 1px solid #dfe2e4;
    border-right: 1px solid #d7dadc;
}

.props-head {
    height: 23px;
}

.props-box {
    flex: 1;
    background: #fff;
    border-top: 1px solid #dfe2e4;
}

.props-type {
    height: 28px;
    line-height: 27px;
    padding-left: 3px;
    background: #fafafa;
    color: #222;
    white-space: nowrap;
}

.props-group {
    height: 20px;
    line-height: 18px;
    border: 1px dashed #8c8c8c;
    margin-left: 1px;
    padding-left: 17px;
    font-weight: 700;
    color: #333;
    background: #fafafa;
    position: relative;
}

.props-minus {
    position: absolute;
    left: 3px;
    top: 5px;
    width: 9px;
    height: 9px;
    border: 1px solid #555;
    background: linear-gradient(#555, #555) center / 5px 1px no-repeat;
}

.props-row {
    height: 21px;
    display: grid;
    grid-template-columns: 164px 1fr;
    border-bottom: 1px solid #f1f1f1;
    margin-left: 12px;
    line-height: 20px;
    box-shadow: -12px 0 0 #f7f7f7;
}

.props-name {
    padding-left: 7px;
    color: #555;
    border-right: 1px solid #f1f1f1;
}

.props-value {
    padding-left: 3px;
    color: #aaa;
}

.side-strip-right {
    width: 33px;
    padding-right: 0;
    padding-left: 2px;
}

.statusbar {
    height: 24px;
    flex: none;
    background: #c75c00;
    color: #f7e8da;
    font-size: 13px;
    letter-spacing: .3px;
    padding-left: 1256px;
    display: grid;
    grid-template-columns: 40px 222px 42px 40px 85px 149px auto;
    align-items: center;
    white-space: nowrap;
}

.st-item {
    display: flex;
    align-items: center;
    gap: 4px;
}

.st-o {
    width: 10px;
    height: 14px;
    background: #e7965a;
    color: #c75c00;
    font-size: 10px;
    line-height: 14px;
    text-align: center;
}

.st-chev {
    width: 7px;
    height: 5px;
    margin-left: 3px;
    color: #f7e8da;
}

.st-dot {
    width: 8px;
    height: 8px;
    border-radius: 50%;
    background: #9a7251;
    margin: 0 4px 0 2px;
}

.st-ic {
    width: 12px;
    height: 12px;
}

.st-p {
    color: #e7b488;
    margin-right: 6px;
}

.screen-right .taskbar {
    padding-left: 12px;
}

.tray-ic {
    flex: none;
    align-self: center;
}

.tray-up {
    width: 11px;
    height: 7px;
    margin-left: auto;
}

.tray-net {
    width: 15px;
    height: 17px;
    margin-left: 18px;
}

.tray-vol {
    width: 15px;
    height: 13px;
    margin-left: 10px;
}

.toast {
    position: absolute;
    right: 12px;
    bottom: 60px;
    width: 422px;
    height: 124px;
    background: #009ad7;
    color: #e8f6fc;
    font-family: "Liberation Sans", Arial, sans-serif;
    padding: 14px 14px 0 15px;
    display: flex;
    flex-direction: column;
}

.toast-head {
    display: flex;
    justify-content: space-between;
    align-items: center;
    height: 14px;
}

.toast-title {
    font-size: 14px;
    font-weight: 700;
    color: #fff;
}

.toast-x {
    font-size: 13px;
    color: #fff;
    margin-right: 1px;
}

.toast-msg {
    margin-top: 20px;
    font-size: 13px;
    word-spacing: 2px;
    line-height: 15px;
    width: 360px;
}

.toast-foot {
    margin-top: 25px;
    display: flex;
    align-items: center;
    font-size: 12.500px;
}

.toast-bar {
    width: 236px;
    height: 9px;
    background: #e6e6e6;
    border: 1px solid #bcbcbc;
}

.toast-fill {
    width: 4%;
    height: 100%;
    background: #06b025;
}

.toast-pct {
    margin-left: 53px;
    margin-right: 33px;
}
```
